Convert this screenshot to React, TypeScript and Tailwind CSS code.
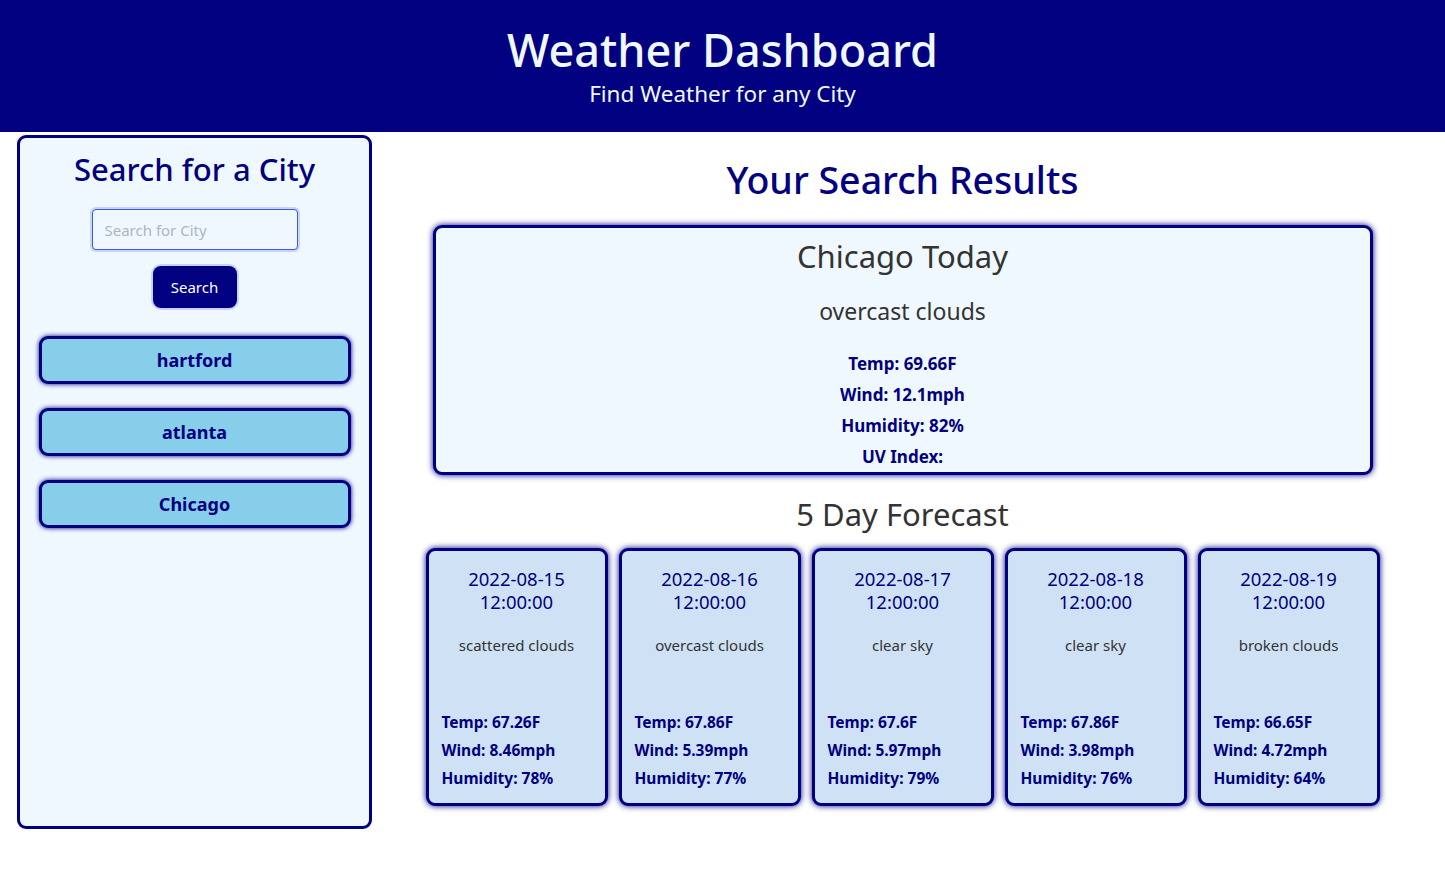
import React from 'react';

interface Forecast {
  date: string;
  time: string;
  desc: string;
  temp: string;
  wind: string;
  humidity: string;
}

const forecast: Forecast[] = [
  { date: '2022-08-15', time: '12:00:00', desc: 'scattered clouds', temp: '67.26F', wind: '8.46mph', humidity: '78%' },
  { date: '2022-08-16', time: '12:00:00', desc: 'overcast clouds', temp: '67.86F', wind: '5.39mph', humidity: '77%' },
  { date: '2022-08-17', time: '12:00:00', desc: 'clear sky', temp: '67.6F', wind: '5.97mph', humidity: '79%' },
  { date: '2022-08-18', time: '12:00:00', desc: 'clear sky', temp: '67.86F', wind: '3.98mph', humidity: '76%' },
  { date: '2022-08-19', time: '12:00:00', desc: 'broken clouds', temp: '66.65F', wind: '4.72mph', humidity: '64%' },
];

const history = ['hartford', 'atlanta', 'Chicago'];

const App: React.FC = () => {
  return (
    <div className="min-h-[871px] bg-white font-['Noto_Sans',sans-serif]">
      <header className="h-[132px] bg-[#000080] text-[#f0f8ff] flex flex-col items-center pt-[20px]">
        <h1 className="text-[45px] leading-[60px] font-medium">Weather Dashboard</h1>
        <p className="text-[22.5px] leading-[30px] mt-[-1px]">Find Weather for any City</p>
      </header>

      <div className="flex">
        <aside className="ml-[17px] mt-[3px] w-[355px] h-[694px] border-[3px] border-[#000080] rounded-[9px] bg-[#f0f8ff] flex flex-col items-center">
          <h2 className="mt-[11px] text-[31px] leading-[40px] text-[#000080] font-medium">Search for a City</h2>
          <input
            placeholder="Search for City"
            className="mt-[20px] w-[206px] h-[41px] px-[12px] text-[15px] bg-[#f0f8ff] border border-[#3b5bdb] rounded-[4px] shadow-[0_0_0_2px_#c7d2fe] placeholder:text-[#b0b4bc]"
          />
          <button className="mt-[16px] w-[84px] h-[42px] bg-[#000080] text-white text-[15px] rounded-[8px] shadow-[0_0_0_2px_#c7d2fe]">
            Search
          </button>
          <div className="mt-[28px] flex flex-col gap-[24px]">
            {history.map((city) => (
              <button
                key={city}
                className="w-[312px] h-[48px] bg-[#87ceeb] border-[3px] border-[#000080] rounded-[9px] text-[#000080] text-[18px] font-bold shadow-[0_0_5px_#000080]"
              >
                {city}
              </button>
            ))}
          </div>
        </aside>

        <main className="flex-1 flex flex-col items-center pl-[20px] pr-[32px]">
          <h2 className="mt-[25px] text-[37.5px] leading-[46px] text-[#000080] font-medium">Your Search Results</h2>
          <section className="mt-[22px] w-[940px] h-[250px] border-[3px] border-[#000080] rounded-[9px] bg-[#f0f8ff] shadow-[0_0_6px_#000080] flex flex-col items-center">
            <h3 className="mt-[8px] text-[31px] leading-[40px] text-[#333]">Chicago Today</h3>
            <p className="mt-[20px] text-[23px] leading-[30px] text-[#333]">overcast clouds</p>
            <div className="mt-[22px] flex flex-col items-center text-[#000080] text-[17px] font-bold leading-[31px]">
              <p>Temp: 69.66F</p>
              <p>Wind: 12.1mph</p>
              <p>Humidity: 82%</p>
              <p>UV Index:</p>
            </div>
          </section>

          <h3 className="mt-[19px] text-[31px] leading-[40px] text-[#333]">5 Day Forecast</h3>
          <div className="mt-[14px] flex gap-[11px]">
            {forecast.map((f) => (
              <div
                key={f.date}
                className="w-[182px] h-[258px] border-[3px] border-[#000080] rounded-[9px] bg-[#cfe2f5] shadow-[0_0_6px_#000080] flex flex-col px-[13px]"
              >
                <div className="mt-[16px] text-center text-[#000080] text-[18.5px] leading-[23px]">
                  <p>{f.date}</p>
                  <p>{f.time}</p>
                </div>
                <p className="mt-[22px] text-center text-[#333] text-[15px] leading-[20px]">{f.desc}</p>
                <div className="mt-auto mb-[11px] text-[#000080] text-[15.5px] font-bold leading-[28px]">
                  <p>Temp: {f.temp}</p>
                  <p>Wind: {f.wind}</p>
                  <p>Humidity: {f.humidity}</p>
                </div>
              </div>
            ))}
          </div>
        </main>
      </div>
    </div>
  );
};

export default App;
